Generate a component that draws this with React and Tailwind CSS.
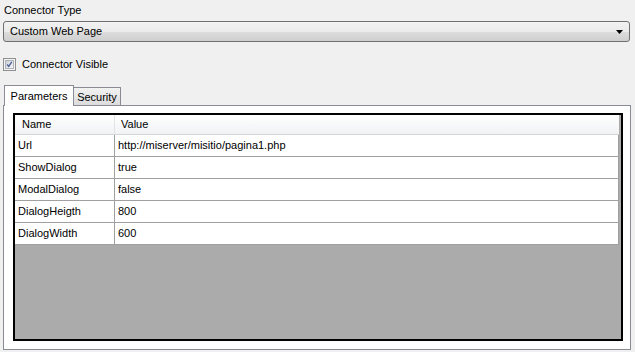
export default function App() {
  const rows = [
    ["Url", "http://miserver/misitio/pagina1.php"],
    ["ShowDialog", "true"],
    ["ModalDialog", "false"],
    ["DialogHeigth", "800"],
    ["DialogWidth", "600"],
  ];
  return (
    <div
      className="w-[635px] h-[352px] bg-[#f0f0f0] text-[11px] text-black overflow-hidden flex flex-col"
      style={{ fontFamily: '"Liberation Sans", Arial, sans-serif' }}
    >
      <div className="ml-[4px] mt-[4px] leading-[13px] h-[13px]">Connector Type</div>
      <div className="ml-[3px] mt-[4px] w-[627px] h-[21px] rounded-[3px] border border-[#707070] bg-[linear-gradient(to_bottom,#f2f2f2_0%,#ebebeb_50%,#dddddd_51%,#cfcfcf_100%)] flex items-center pl-[6px] pr-[6px]">
        <span className="flex-1 leading-[13px]">Custom Web Page</span>
        <svg width="7" height="4" viewBox="0 0 7 4" className="mr-[0px]">
          <polygon points="0,0 7,0 3.5,4" fill="#000" />
        </svg>
      </div>
      <div className="ml-[3px] mt-[16px] h-[13px] flex items-center">
        <div className="w-[13px] h-[13px] border border-[#8e8f8f] bg-[#f4f4f4] p-[1px]">
          <div className="w-full h-full bg-[linear-gradient(135deg,#cbcfd5,#f6f6f6)] border border-[#aeb3b9] flex items-center justify-center">
            <svg width="9" height="9" viewBox="0 0 9 9">
              <path d="M1.5 4.5 L3.5 7 L7.5 1.2" stroke="#4a5f97" strokeWidth="1.6" fill="none" />
            </svg>
          </div>
        </div>
        <span className="ml-[6px] leading-[13px]">Connector Visible</span>
      </div>
      <div className="ml-[4px] mt-[14px] h-[20px] flex items-end">
        <div className="relative z-10 w-[70px] h-[21px] -mb-px bg-white border-l border-t border-r border-[#898c95] flex items-start justify-center pt-[4px] leading-[13px]">
          Parameters
        </div>
        <div className="w-[47px] h-[18px] bg-[linear-gradient(to_bottom,#f2f2f2,#dcdcdc)] border-t border-r border-[#898c95] flex items-start justify-center pt-[3px] leading-[13px]">
          Security
        </div>
      </div>
      <div className="ml-[3px] w-[628px] h-[245px] bg-white border border-[#898c95] pt-[7px] pl-[9px]">
        <div className="w-[610px] h-[228px] border-2 border-black bg-[#ababab] flex flex-col">
          <div className="w-[604px] h-[20px] shrink-0 flex bg-[linear-gradient(to_bottom,#ffffff,#f1f2f4)] border-b border-[#d5d5d5]">
            <div className="w-[100px] border-r border-[#e3e3e3] pl-[7px] flex items-center">Name</div>
            <div className="flex-1 pl-[6px] flex items-center">Value</div>
          </div>
          {rows.map(([n, v]) => (
            <div key={n} className="w-[604px] h-[22px] shrink-0 flex bg-white border-b border-r border-[#a0a0a0]">
              <div className="w-[100px] border-r border-[#a0a0a0] pl-[3px] flex items-center">{n}</div>
              <div className="flex-1 pl-[3px] flex items-center">{v}</div>
            </div>
          ))}
        </div>
      </div>
    </div>
  );
}
